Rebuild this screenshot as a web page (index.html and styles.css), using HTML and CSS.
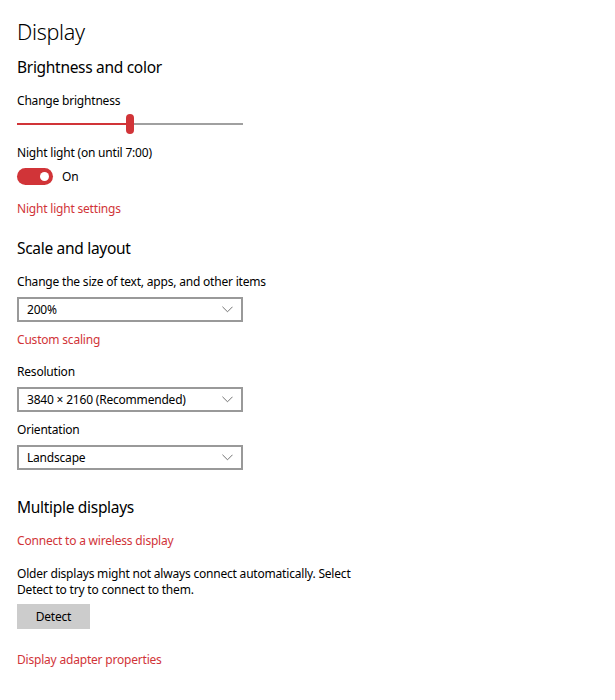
FILE: index.html
```html
<!DOCTYPE html>
<html lang="en">
<head>
  <meta charset="UTF-8" />
  <title>Display</title>
  <link rel="stylesheet" href="styles.css">
</head>
<body>
  <div class="settings">
    <h1 class="page-title">Display</h1>

    <h2 class="section-title first">Brightness and color</h2>
    <div class="label label-top">Change brightness</div>
    <div class="slider">
      <div class="slider-fill"></div>
      <div class="slider-thumb"></div>
      <div class="slider-rest"></div>
    </div>

    <div class="label label-night">Night light (on until 7:00)</div>
    <div class="toggle-row">
      <div class="toggle"><div class="toggle-knob"></div></div>
      <span class="toggle-text">On</span>
    </div>
    <a class="link link-night" href="#">Night light settings</a>

    <h2 class="section-title scale">Scale and layout</h2>
    <div class="label label-top">Change the size of text, apps, and other items</div>
    <div class="select">
      <span>200%</span>
      <svg class="chevron" viewBox="0 0 12 7"><path d="M0.5 0.5 L6 6 L11.5 0.5"/></svg>
    </div>
    <a class="link link-after-select" href="#">Custom scaling</a>

    <div class="label label-top">Resolution</div>
    <div class="select">
      <span>3840 × 2160 (Recommended)</span>
      <svg class="chevron" viewBox="0 0 12 7"><path d="M0.5 0.5 L6 6 L11.5 0.5"/></svg>
    </div>

    <div class="label label-after-select">Orientation</div>
    <div class="select">
      <span>Landscape</span>
      <svg class="chevron" viewBox="0 0 12 7"><path d="M0.5 0.5 L6 6 L11.5 0.5"/></svg>
    </div>

    <h2 class="section-title multi">Multiple displays</h2>
    <a class="link link-top" href="#">Connect to a wireless display</a>
    <p class="note">Older displays might not always connect automatically. Select<br>Detect to try to connect to them.</p>
    <button class="detect-button">Detect</button>
    <a class="link link-adapter" href="#">Display adapter properties</a>
  </div>
</body>
</html>
```

FILE: styles.css
```css
html, body {
  margin: 0;
  background: #fff;
  color: #000;
  font-family: 'Noto Sans', 'Open Sans', sans-serif;
}

.settings {
  padding: 16px 17px 20px;
  display: flex;
  flex-direction: column;
  align-items: flex-start;
  font-size: 12px;
  letter-spacing: -0.2px;
}

.page-title {
  margin: 0;
  font-size: 21.5px;
  font-weight: 300;
  line-height: 32px;
  letter-spacing: -0.3px;
}

.section-title {
  margin: 0;
  font-size: 15.5px;
  font-weight: 400;
  line-height: 24px;
  letter-spacing: -0.3px;
}

.section-title.first { margin-top: 7px; }
.section-title.scale { margin-top: 17px; }
.section-title.multi { margin-top: 25px; }

.label {
  line-height: 20px;
}

.label-top { margin-top: 12px; }
.label-night { margin-top: 9px; }
.label-after-select { margin-top: 8px; }

.slider {
  margin-top: 3px;
  width: 226px;
  height: 20px;
  display: flex;
  align-items: center;
}

.slider-fill {
  width: 109px;
  height: 2px;
  background: #d13438;
}

.slider-thumb {
  width: 8px;
  height: 20px;
  border-radius: 4px;
  background: #d13438;
}

.slider-rest {
  flex: 1;
  height: 2px;
  background: #a0a0a0;
}

.toggle-row {
  margin-top: 3px;
  height: 20px;
  display: flex;
  align-items: center;
  gap: 9px;
}

.toggle {
  width: 36px;
  height: 17px;
  border-radius: 9px;
  background: #d13438;
  display: flex;
  align-items: center;
  justify-content: flex-end;
  padding-right: 4px;
  box-sizing: border-box;
}

.toggle-knob {
  width: 9px;
  height: 9px;
  border-radius: 50%;
  background: #fff;
}

.link {
  color: #d13438;
  text-decoration: none;
  line-height: 20px;
}

.link-night { margin-top: 13px; }
.link-after-select { margin-top: 8px; }
.link-top { margin-top: 12px; }
.link-adapter { margin-top: 21px; }

.select {
  margin-top: 5px;
  width: 226px;
  height: 25px;
  box-sizing: border-box;
  border: 2px solid #999;
  padding: 0 8px 0 8px;
  display: flex;
  align-items: center;
  justify-content: space-between;
}

.chevron {
  width: 11px;
  height: 7px;
  fill: none;
  stroke: #666;
  stroke-width: 1;
}

.note {
  margin: 15px 0 0;
  line-height: 16px;
}

.detect-button {
  margin-top: 6px;
  width: 73px;
  height: 25px;
  border: none;
  background: #ccc;
  font-family: inherit;
  font-size: 12px;
  letter-spacing: -0.2px;
  color: #000;
  padding: 0;
}
```
